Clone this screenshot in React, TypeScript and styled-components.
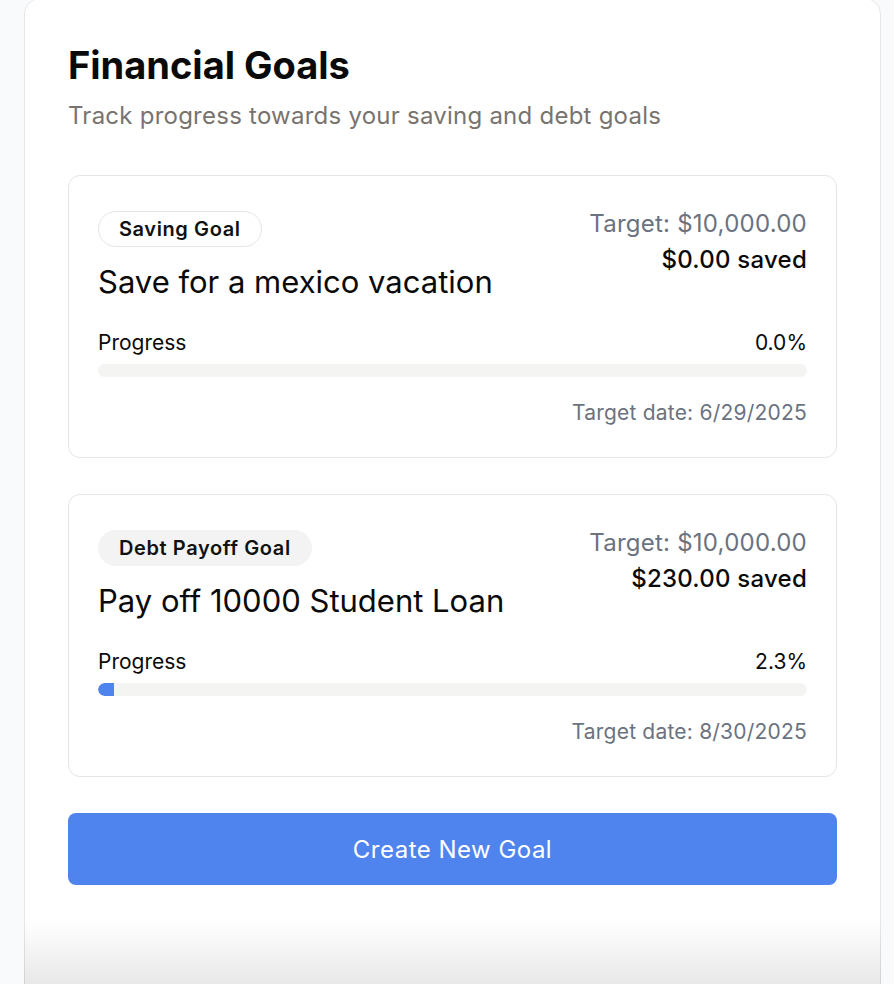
import styled, { createGlobalStyle } from "styled-components";

const GlobalStyle = createGlobalStyle`
  * { box-sizing: border-box; }
  body {
    margin: 0;
    background: #f9fafb;
    font-family: Inter, "Noto Sans", "Liberation Sans", sans-serif;
    color: #0a0a0a;
  }
`;

const Page = styled.div`
  padding: 0 13px 0 24px;
`;

const Panel = styled.section`
  margin-top: -2px;
  background: #ffffff;
  border: 1px solid #e7e7e7;
  border-radius: 16px;
  padding: 44px 43px 120px;
`;

const Title = styled.h1`
  margin: 0;
  font-size: 38px;
  line-height: 44px;
  font-weight: 700;
  letter-spacing: 0;
`;

const Subtitle = styled.p`
  margin: 13px 0 0;
  font-size: 24px;
  line-height: 32px;
  letter-spacing: 0.01em;
  color: #78736f;
`;

const GoalList = styled.div`
  display: flex;
  flex-direction: column;
  gap: 36px;
  margin-top: 43px;
`;

const GoalCard = styled.article`
  border: 1px solid #e5e5e5;
  border-radius: 12px;
  padding: 30px 29px 30px;
`;

const TopRow = styled.div`
  display: flex;
  justify-content: space-between;
  align-items: flex-start;
`;

const Badge = styled.span<{ $filled?: boolean }>`
  display: inline-flex;
  align-items: center;
  height: 36px;
  margin-top: 5px;
  padding: 0 20px;
  border-radius: 999px;
  font-size: 20px;
  font-weight: 600;
  letter-spacing: 0.03em;
  border: 1px solid ${(p) => (p.$filled ? "#f3f3f3" : "#e5e5e5")};
  background: ${(p) => (p.$filled ? "#f3f3f3" : "#ffffff")};
  color: #111111;
`;

const GoalName = styled.h2`
  margin: 17px 0 0;
  font-size: 31px;
  line-height: 36px;
  font-weight: 400;
`;

const Amounts = styled.div`
  text-align: right;
  font-size: 24px;
  line-height: 36px;
  letter-spacing: 0.01em;
`;

const TargetAmount = styled.div`
  color: #6b7280;
`;

const Saved = styled.div`
  font-weight: 500;
  color: #0a0a0a;
`;

const ProgressHead = styled.div`
  display: flex;
  justify-content: space-between;
  margin-top: 29px;
  font-size: 21px;
  line-height: 28px;
`;

const Track = styled.div`
  margin-top: 7px;
  height: 13px;
  border-radius: 999px;
  background: #f4f4f3;
  overflow: hidden;
`;

const Fill = styled.div`
  height: 100%;
  background: #4f83ee;
  border-radius: 999px 0 0 999px;
`;

const TargetDate = styled.div`
  margin-top: 22px;
  text-align: right;
  font-size: 21px;
  line-height: 28px;
  letter-spacing: 0.01em;
  color: #6b7280;
`;

const CreateButton = styled.button`
  display: block;
  width: 100%;
  height: 72px;
  margin-top: 36px;
  border: none;
  border-radius: 8px;
  background: #4f83ee;
  color: #ffffff;
  font-family: inherit;
  font-size: 24px;
  letter-spacing: 0.02em;
  cursor: pointer;
`;

const BottomFade = styled.div`
  position: fixed;
  left: 24px;
  right: 13px;
  bottom: 0;
  height: 64px;
  pointer-events: none;
  background: linear-gradient(to bottom, rgba(0, 0, 0, 0), rgba(0, 0, 0, 0.09));
`;

interface Goal {
  id: number;
  kind: string;
  filled: boolean;
  name: string;
  target: string;
  saved: string;
  percent: number;
  date: string;
}

const goals: Goal[] = [
  {
    id: 1,
    kind: "Saving Goal",
    filled: false,
    name: "Save for a mexico vacation",
    target: "$10,000.00",
    saved: "$0.00",
    percent: 0,
    date: "6/29/2025",
  },
  {
    id: 2,
    kind: "Debt Payoff Goal",
    filled: true,
    name: "Pay off 10000 Student Loan",
    target: "$10,000.00",
    saved: "$230.00",
    percent: 2.3,
    date: "8/30/2025",
  },
];

function App() {
  return (
    <Page>
      <GlobalStyle />
      <Panel>
        <Title>Financial Goals</Title>
        <Subtitle>Track progress towards your saving and debt goals</Subtitle>
        <GoalList>
          {goals.map((goal) => (
            <GoalCard key={goal.id}>
              <TopRow>
                <div>
                  <Badge $filled={goal.filled}>{goal.kind}</Badge>
                  <GoalName>{goal.name}</GoalName>
                </div>
                <Amounts>
                  <TargetAmount>Target: {goal.target}</TargetAmount>
                  <Saved>{goal.saved} saved</Saved>
                </Amounts>
              </TopRow>
              <ProgressHead>
                <span>Progress</span>
                <span>{goal.percent.toFixed(1)}%</span>
              </ProgressHead>
              <Track>
                <Fill style={{ width: `${goal.percent}%` }} />
              </Track>
              <TargetDate>Target date: {goal.date}</TargetDate>
            </GoalCard>
          ))}
        </GoalList>
        <CreateButton>Create New Goal</CreateButton>
      </Panel>
      <BottomFade />
    </Page>
  );
}

export default App;
